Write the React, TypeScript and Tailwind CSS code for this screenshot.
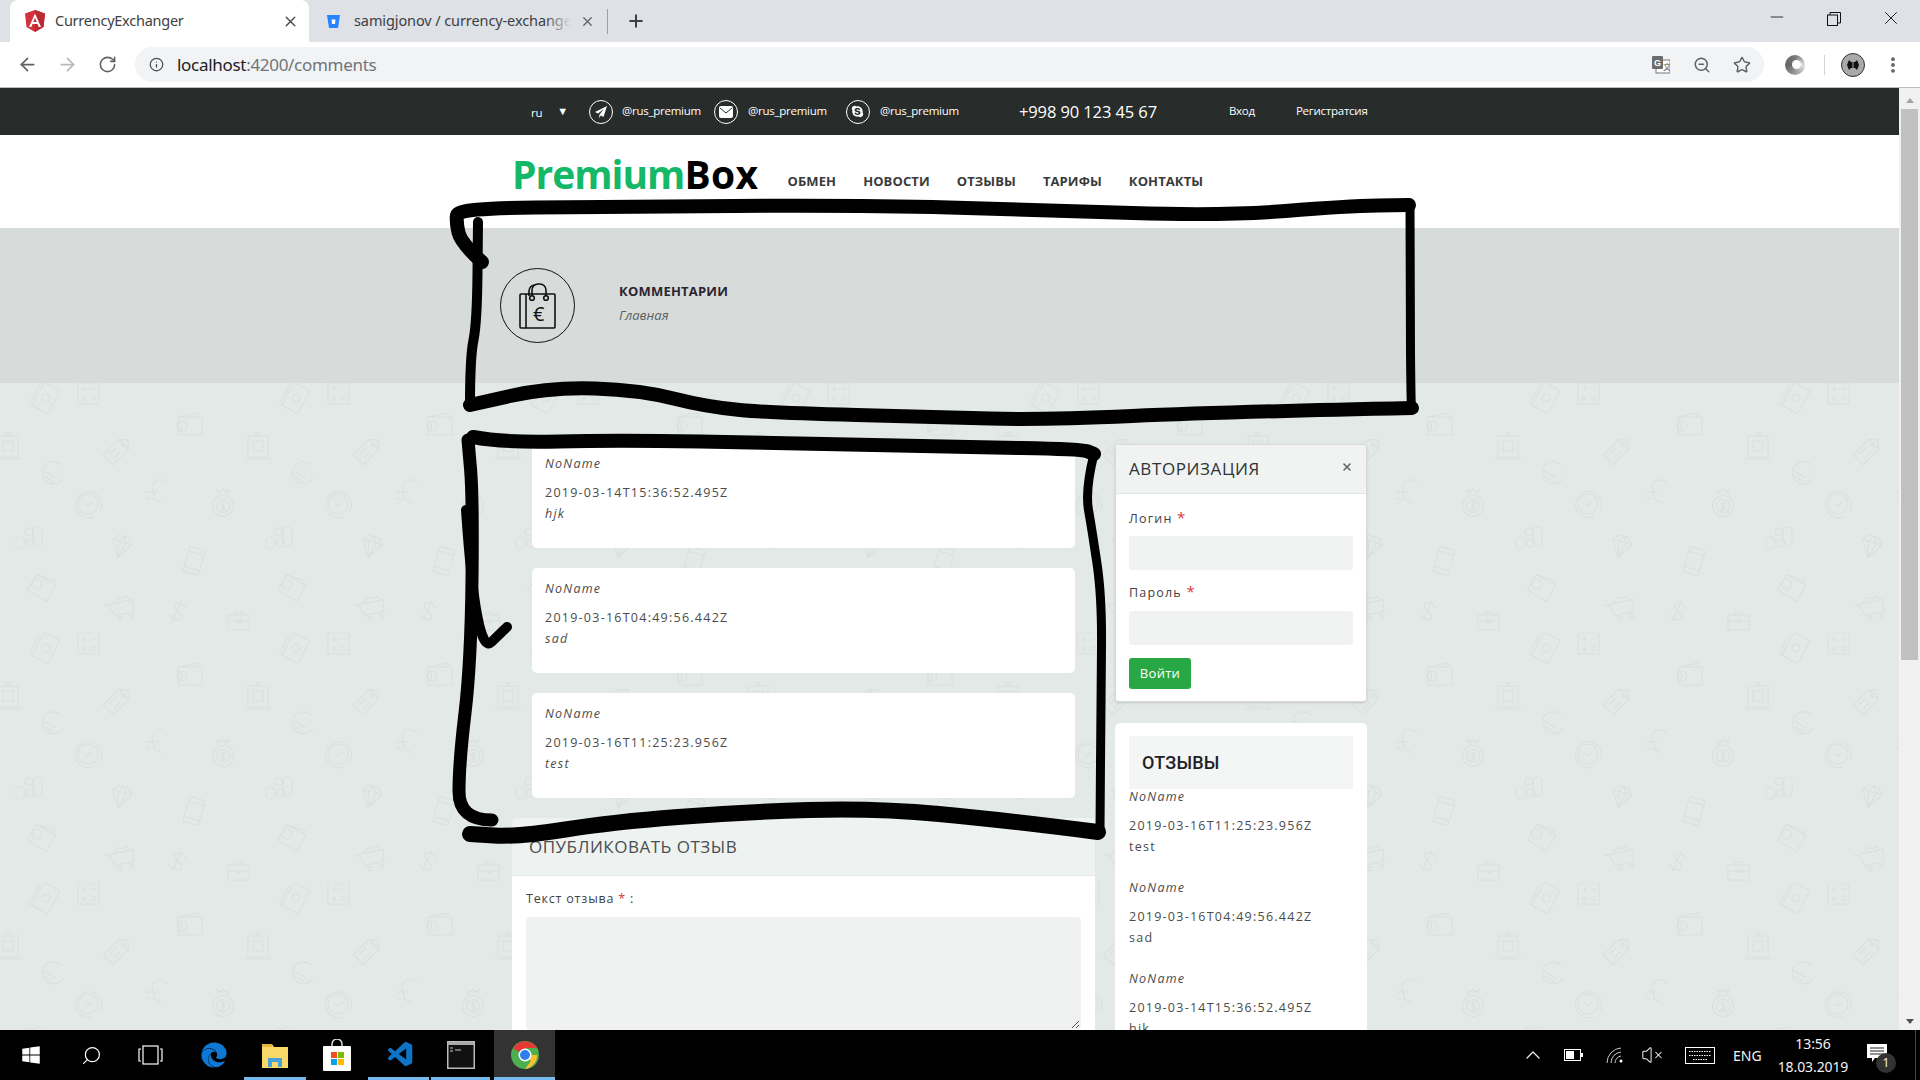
import * as React from "react";
import { ArrowLeft, ArrowRight, ChevronUp, Info, Minus, MoreVertical, Plus, RotateCw, Search, Star, VolumeX, X, ZoomOut } from "lucide-react";
import { FaEdge, FaSkype, FaWindows } from "react-icons/fa";
import { VscVscode } from "react-icons/vsc";

const openSans = "font-['Open_Sans',sans-serif]";

type Pt = [number, number];

function smooth(points: Pt[]) {
  let d = `M${points[0][0]} ${points[0][1]}`;
  for (let i = 1; i < points.length - 1; i++) {
    const mx = (points[i][0] + points[i + 1][0]) / 2;
    const my = (points[i][1] + points[i + 1][1]) / 2;
    d += ` Q${points[i][0]} ${points[i][1]} ${mx} ${my}`;
  }
  const last = points[points.length - 1];
  return d + ` L${last[0]} ${last[1]}`;
}

const strokes: { w: number; pts: Pt[] }[] = [
  { w: 14, pts: [[482, 262], [461, 243], [456, 222], [458, 208], [612, 207], [857, 205], [1041, 210], [1224, 216], [1347, 206], [1409, 205]] },
  { w: 9, pts: [[1410, 203], [1410, 300], [1411, 405], [1412, 410]] },
  { w: 14, pts: [[1412, 408], [1224, 412], [1040, 420], [940, 417], [773, 413], [707, 407], [640, 390], [550, 387], [470, 405]] },
  { w: 10, pts: [[470, 405], [470, 357], [477, 323], [478, 222]] },
  { w: 14, pts: [[473, 437], [505, 443], [613, 440], [787, 443], [960, 447], [1082, 449], [1094, 454]] },
  { w: 9, pts: [[1094, 454], [1085, 490], [1092, 530], [1102, 597], [1101, 697], [1100, 830]] },
  { w: 16, pts: [[1098, 832], [1004, 820], [874, 808], [743, 812], [613, 822], [518, 837], [470, 834]] },
  { w: 13, pts: [[492, 820], [459, 820], [459, 763], [471, 663], [473, 497], [468, 440]] },
  { w: 10, pts: [[466, 510], [476, 657], [507, 627]] },
];

function Scribbles() {
  return (
    <svg className="absolute left-0 top-0 pointer-events-none" width="1920" height="1080" fill="none" stroke="#000" strokeLinecap="round" strokeLinejoin="round">
      {strokes.map((s, i) => (
        <path key={i} d={smooth(s.pts)} strokeWidth={s.w} />
      ))}
    </svg>
  );
}

function PatternBg() {
  return (
    <svg className="absolute inset-0" width="100%" height="100%">
      <defs>
        <pattern id="tile" width="250" height="250" patternUnits="userSpaceOnUse">
          <g fill="none" stroke="#d9e0de" strokeWidth="1.1">
            {/* bills */}
            <g transform="translate(46 15) rotate(28)"><rect x="-9" y="-13" width="18" height="26" rx="2" /><circle r="4" /><path d="M-12 -9v22h14" /></g>
            {/* calculator */}
            <g transform="translate(89 11)"><rect x="-11" y="-11" width="21" height="21" /><path d="M-7 -5h5M-4.500 -7.500v5M2 -5h5M-7 3l4 4M-3 3l-4 4M2 3h5M2 6h5" /></g>
            {/* wallet */}
            <g transform="translate(190 42)"><path d="M-12 -8L8 -12v4M-12 -8h24v18h-24zM-12 -4a6 6 0 0 1 0 11" /><circle cx="-8" cy="1" r="5" /></g>
            {/* laptop */}
            <g transform="translate(8 64)"><rect x="-10" y="-11" width="20" height="21" /><rect x="-5" y="-6" width="10" height="10" /><path d="M-14 12h28M-3 -14h6M0 -14v3" /></g>
            <g transform="translate(258 64)"><rect x="-10" y="-11" width="20" height="21" /><rect x="-5" y="-6" width="10" height="10" /><path d="M-14 12h28" /></g>
            {/* tag */}
            <g transform="translate(118 67) rotate(45)"><path d="M-7 -8h14v22h-14zM-7 -8l7 -6 7 6M-3 0v9M3 0v9" /><circle cy="-7" r="1.500" /></g>
            {/* euro */}
            <g transform="translate(52 90)"><path d="M9 -8a11 11 0 1 0 2 13M-8 -2l12 7M-8 3l10 6" /></g>
            {/* clock */}
            <g transform="translate(88 121)"><path d="M5 13a13 13 0 1 1 7 -6" /><circle r="10" /><path d="M-3 0l3 2 4 -4" /></g>
            {/* pound */}
            <g transform="translate(156 108)"><path d="M11 -7a8 8 0 0 0 -15 3c0 6 4 9 2 12l8 4M-10 1h12M-5 8l-5 -1" /></g>
            {/* moneybag */}
            <g transform="translate(223 120)"><circle cy="3" r="10.500" /><path d="M-4 -8l-2 -5 4 2 2 -3 2 3 4 -2 -2 5" /><circle cy="3" r="6.500" /><path d="M2.500 0.500c-3 -2 -5 0 -3 2s4 2 2 4-4 0-4 0M0 -2v10" /></g>
            {/* coins */}
            <g transform="translate(29 156)"><rect x="-13" y="-2" width="9" height="12" rx="4" /><rect x="-4" y="-11" width="8" height="7" rx="3" /><rect x="4" y="-12" width="9" height="19" rx="4" /><circle cx="2" cy="4" r="4" /></g>
            {/* diamond */}
            <g transform="translate(121 164) rotate(15)"><path d="M-10 -5l5 -6h10l5 6 -10 16zM-10 -5h20M-4 -5l4 16 4 -16 -4 -6z" /></g>
            {/* phone */}
            <g transform="translate(194 178) rotate(16)"><rect x="-8" y="-13" width="16" height="26" rx="2" /><path d="M-8 -8h16M-8 8h16" /></g>
            {/* wallet tilted */}
            <g transform="translate(42 204) rotate(30)"><path d="M-11 -8L8 -12v4M-11 -8h22v18h-22z" /><circle cx="-6" cy="0" r="5" /></g>
            {/* cart */}
            <g transform="translate(122 226) rotate(-12)"><path d="M-17 -8l5 2 4 11h19l2 -12h-25" /><path d="M-7 -8l5 -4 5 2 4 -2 3 5" /><circle cx="-4" cy="9" r="2" /><circle cx="8" cy="9" r="2" /></g>
            {/* dollar */}
            <g transform="translate(177 228) rotate(25)"><path d="M7 -6c-4 -4 -13 -3 -12 2s12 3 12 8-9 6-13 2M0 -11v22" /></g>
            {/* briefcase */}
            <g transform="translate(239 238)"><rect x="-11" y="-6" width="21" height="15" /><path d="M-4 -6v-3h7v3M-11 0h21" /><circle cy="0" r="2" /></g>
          </g>
        </pattern>
      </defs>
      <rect width="100%" height="100%" fill="url(#tile)" />
    </svg>
  );
}

function Tabs() {
  return (
    <div className="h-[42px] bg-[#dee1e6] flex items-end font-['Noto_Sans',sans-serif] text-[14.500px] text-[#3c4043]">
      <div className="ml-[10px] w-[299px] h-[42px] bg-white rounded-t-[8px] flex items-center pl-[15px] pr-[10px]">
        <svg width="20" height="22" viewBox="0 0 20 22">
          <path d="M10 0L0 3.500l1.500 13.500L10 22l8.500-5L20 3.500z" fill="#d4303a" />
          <path d="M10 0v22l8.500-5L20 3.500z" fill="#b92a33" />
          <path d="M10 3.500L4 17h2.300l1.200-3h5l1.200 3H16zM8.300 12L10 7.800l1.700 4.200z" fill="#fff" />
        </svg>
        <span className="ml-[10px] flex-1 tracking-[-0.25px]">CurrencyExchanger</span>
        <X size={17} strokeWidth={2} className="text-[#4a4d50]" />
      </div>
      <div className="w-[299px] h-[42px] flex items-center pl-[17px] pr-[11px] relative">
        <svg width="15" height="15" viewBox="0 0 15 15">
          <path d="M1 1h13l-2 13H3z" fill="#2684ff" />
          <path d="M5.500 5.500h4L9 10H6z" fill="#fff" />
        </svg>
        <div className="relative ml-[13px] w-[217px] overflow-hidden whitespace-nowrap tracking-[-0.1px]">
          samigjonov / currency-exchanger
          <div className="absolute right-0 inset-y-0 w-[26px] bg-gradient-to-r from-transparent to-[#dee1e6]" />
        </div>
        <X size={15} strokeWidth={2} className="ml-[9px] text-[#5f6368]" />
        <div className="absolute right-[0px] top-[9px] h-[25px] w-px bg-[#9aa0a6]" />
      </div>
      <Plus size={20} strokeWidth={2.4} className="ml-[18px] mb-[11px] text-[#3c4043]" />
      <div className="flex-1" />
      <div className="h-[42px] flex items-start pt-[7px] text-[#111]">
        <Minus size={20} strokeWidth={1} className="mr-[40px]" />
        <svg width="14" height="14" viewBox="0 0 14 14" fill="none" stroke="#111" className="mt-[5px] mr-[39px]">
          <rect x="0.500" y="3" width="10" height="10.500" />
          <path d="M3 3V0.500h10.500V11H10.500" />
        </svg>
        <X size={22} strokeWidth={1} className="mr-[18px]" />
      </div>
    </div>
  );
}

function Toolbar() {
  return (
    <div className="h-[46px] bg-white border-b border-[#b9bcbf] flex items-center text-[#5f6368]">
      <ArrowLeft size={21} strokeWidth={2} className="ml-[17px]" />
      <ArrowRight size={21} strokeWidth={2} className="ml-[19px] text-[#b7b9bc]" />
      <RotateCw size={19} strokeWidth={2} className="ml-[20px]" />
      <div className="ml-[18px] w-[1629px] h-[35px] rounded-full bg-[#f1f3f4] flex items-center pl-[14px] pr-[13px]">
        <Info size={15} strokeWidth={2} className="text-[#4a4d50]" />
        <span className="ml-[13px] text-[17px] tracking-[-0.3px] font-['Noto_Sans',sans-serif] text-[#70757a]">
          <span className="text-[#202124]">localhost</span>:4200/comments
        </span>
        <div className="flex-1" />
        <svg width="18" height="18" viewBox="0 0 18 18" className="mr-[23px]">
          <rect x="4" y="4" width="14" height="13" fill="#fff" stroke="#777" />
          <rect width="11" height="13" rx="1" fill="#6a6d70" />
          <text x="2" y="10" fontSize="9" fontWeight="700" fontFamily="Liberation Sans" fill="#fff">G</text>
          <text x="11" y="14" fontSize="8" fontFamily="Noto Sans CJK SC" fill="#555">文</text>
        </svg>
        <ZoomOut size={18} strokeWidth={2} className="mr-[22px]" />
        <Star size={18} strokeWidth={2} />
      </div>
      <div className="ml-[21px] w-[20px] h-[20px] rounded-full bg-[conic-gradient(#777,#ddd,#999,#666,#777)] flex items-center justify-center">
        <div className="w-[9px] h-[9px] rounded-full bg-white ml-[2px]" />
      </div>
      <div className="ml-[19px] w-px h-[20px] bg-[#d0d2d4]" />
      <div className="ml-[16px] w-[24px] h-[24px] rounded-full bg-[#a9a9a9] border border-[#333] flex items-center justify-center">
        <svg width="14" height="14" viewBox="0 0 14 14"><path d="M1 7l2-5 2 2h4l2-2 2 5-2 5-2-2H5l-2 2z" fill="#111" /><path d="M7 3v8" stroke="#aaa" /></svg>
      </div>
      <MoreVertical size={20} strokeWidth={2.6} className="ml-[18px] text-[#5f6368]" />
    </div>
  );
}

function RoundIcon({ children }: { children: React.ReactNode }) {
  return (
    <div className="w-[24px] h-[24px] rounded-full border border-white flex items-center justify-center text-white">
      {children}
    </div>
  );
}

function TopBar() {
  return (
    <div className={`h-[47px] bg-[#282c2b] flex items-center text-white pl-[531px] text-[11.500px] tracking-[-0.25px] ${openSans}`}>
      <span className="mt-[2px]">ru</span>
      <span className="ml-[15px] text-[11px]">▼</span>
      <div className="ml-[21px]">
        <RoundIcon>
          <svg width="14" height="14" viewBox="0 0 14 14" fill="#fff"><path d="M13 1L1 7l3 1.500L10 4 5.500 9.500 5 13l2-2.500 2.500 1.500z" /></svg>
        </RoundIcon>
      </div>
      <span className="ml-[9px] mb-[2px] w-[82px]">@rus_premium</span>
      <div className="ml-[10px]">
        <RoundIcon>
          <svg width="14" height="12" viewBox="0 0 14 12"><rect width="14" height="12" rx="2" fill="#fff" /><path d="M1 2l6 5 6-5" fill="none" stroke="#282c2b" /></svg>
        </RoundIcon>
      </div>
      <span className="ml-[10px] mb-[2px] w-[86px]">@rus_premium</span>
      <div className="ml-[12px]">
        <RoundIcon>
          <FaSkype size={13} />
        </RoundIcon>
      </div>
      <span className="ml-[10px] mb-[2px] w-[139px]">@rus_premium</span>
      <span className="text-[16.500px] font-medium tracking-[-0.1px] mt-[1px] w-[210px]">+998 90 123 45 67</span>
      <span className="mb-[2px] w-[67px]">Вход</span>
      <span className="mb-[2px]">Регистратсия</span>
    </div>
  );
}

function SiteHeader() {
  const nav = ["ОБМЕН", "НОВОСТИ", "ОТЗЫВЫ", "ТАРИФЫ", "КОНТАКТЫ"];
  return (
    <div className={`h-[93px] bg-white flex items-start pl-[512px] pt-[14px] ${openSans}`}>
      <div className="text-[39px] leading-[50px] font-bold flex">
        <span className="text-[#14b866] tracking-[-1px]">Premium</span>
        <span className="text-black tracking-[0.4px]">Box</span>
      </div>
      <div className="ml-[29px] mt-[23px] flex gap-[27px] text-[13px] font-bold text-[#3a3a3a] tracking-[0.1px]">
        {nav.map((n) => (
          <span key={n}>{n}</span>
        ))}
      </div>
    </div>
  );
}

function Breadcrumb() {
  return (
    <div className={`h-[155px] bg-[#d7dcda] flex items-center pl-[500px] ${openSans}`}>
      <div className="w-[75px] h-[75px] rounded-full border border-[#111] flex items-center justify-center">
        <svg width="38" height="46" viewBox="0 0 38 46" fill="none" stroke="#111" strokeWidth="1.6">
          <rect x="1" y="11" width="35" height="34" rx="1" />
          <path d="M7 11v34" />
          <path d="M13 13V7a6 6 0 0 1 6-6h2a6 6 0 0 1 6 6v6" />
          <path d="M10 13V8a6 6 0 0 1 6-6" />
          <circle cx="13" cy="15" r="2.300" fill="#d7dcda" />
          <circle cx="27" cy="15" r="2.300" fill="#d7dcda" />
          <text x="14" y="38" fontSize="20" fontFamily="Open Sans" fill="#111" stroke="none">€</text>
        </svg>
      </div>
      <div className="ml-[44px] mb-[5px]">
        <div className="text-[13px] font-bold text-[#2c2430] tracking-[0.2px] leading-[18px]">КОММЕНТАРИИ</div>
        <div className="mt-[6px] text-[13px] italic text-[#5c5f60] leading-[18px]">Главная</div>
      </div>
    </div>
  );
}

function CommentCard({ date, text }: { date: string; text: string }) {
  return (
    <div className="h-[105px] bg-white rounded-[5px] pl-[13px] pt-[12px] text-[#4b4b4b] text-[12.500px] tracking-[1.25px]">
      <div className="italic leading-[18px]">NoName</div>
      <div className="mt-[11px] leading-[18px]">{date}</div>
      <div className="mt-[3px] italic leading-[18px]">{text}</div>
    </div>
  );
}

function LoginPanel() {
  return (
    <div className="h-[258px] bg-white border border-[#d5d9d8] rounded-[3px] shadow-sm">
      <div className="h-[49px] bg-[#f0f3f2] border-b border-[#e1e5e4] flex items-center justify-between pl-[13px] pr-[13px]">
        <span className="text-[17px] text-[#2f3336] tracking-[0.6px]">АВТОРИЗАЦИЯ</span>
        <X size={12} strokeWidth={3.2} className="text-[#666] mb-[4px]" />
      </div>
      <div className="px-[13px] pt-[16px] text-[12.500px] text-[#3f4345] tracking-[1.2px]">
        <div className="h-[18px] leading-[18px]">Логин <span className="text-[#d9363e] text-[15px] leading-none">*</span></div>
        <div className="mt-[8px] h-[34px] rounded-[3px] bg-[#f0f3f2]" />
        <div className="mt-[14px] h-[18px] leading-[18px]">Пароль <span className="text-[#d9363e] text-[15px] leading-none">*</span></div>
        <div className="mt-[9px] h-[34px] rounded-[3px] bg-[#f0f3f2]" />
        <div className="mt-[13px] w-[62px] h-[31px] rounded-[3px] bg-[#28a745] text-white text-[13px] tracking-[0.3px] flex items-center justify-center">Войти</div>
      </div>
    </div>
  );
}

function ReviewsPanel() {
  const items = [
    ["2019-03-16T11:25:23.956Z", "test"],
    ["2019-03-16T04:49:56.442Z", "sad"],
    ["2019-03-14T15:36:52.495Z", "hjk"],
  ];
  return (
    <div className="mt-[21px] bg-white rounded-[5px] px-[14px] pt-[13px] h-[400px]">
      <div className="h-[53px] bg-[#f4f5f5] flex items-center pl-[13px] text-[18px] font-medium text-[#221f26] font-['Roboto',sans-serif] tracking-[0.2px]">ОТЗЫВЫ</div>
      <div className="-mt-[1px] text-[12.500px] tracking-[1.25px] text-[#4b4b4b]">
        {items.map(([date, text]) => (
          <div key={date} className="h-[91px] leading-[18px]">
            <div className="italic">NoName</div>
            <div className="mt-[11px]">{date}</div>
            <div className="mt-[3px]">{text}</div>
          </div>
        ))}
      </div>
    </div>
  );
}

function Content() {
  return (
    <div className={`relative bg-[#e3e9e7] h-[647px] overflow-hidden ${openSans}`}>
      <PatternBg />
      <div className="relative flex pl-[512px]">
        <div className="w-[583px] pt-[60px]">
          <div className="mx-[20px] flex flex-col gap-[20px] w-[543px]">
            <CommentCard date="2019-03-14T15:36:52.495Z" text="hjk" />
            <CommentCard date="2019-03-16T04:49:56.442Z" text="sad" />
            <CommentCard date="2019-03-16T11:25:23.956Z" text="test" />
          </div>
          <div className="mt-[20px] bg-white rounded-[5px] h-[300px]">
            <div className="h-[58px] bg-[#eef2f1] border-b border-[#e3e8e6] rounded-t-[5px] pl-[17px] pt-[18px] text-[17px] leading-[22px] text-[#4a4e50] tracking-[0.5px]">ОПУБЛИКОВАТЬ ОТЗЫВ</div>
            <div className="px-[14px] pt-[14px]">
              <div className="text-[12.500px] leading-[18px] tracking-[0.8px] text-[#3f4345]">Текст отзыва <span className="text-[#d9363e]">*</span> :</div>
              <div className="relative mt-[9px] h-[113px] rounded-[4px] bg-[#eff2f1]">
                <svg className="absolute right-[1px] bottom-[1px]" width="9" height="9" stroke="#555"><path d="M1 8L8 1M5 8L8 5" /></svg>
              </div>
            </div>
          </div>
        </div>
        <div className="ml-[20px] w-[252px] pt-[61px]">
          <LoginPanel />
          <ReviewsPanel />
        </div>
      </div>
    </div>
  );
}

function ScrollBar() {
  return (
    <div className="w-[21px] bg-[#f1f1f1] flex flex-col items-center pt-[10px] relative">
      <div className="w-0 h-0 border-x-[4px] border-x-transparent border-b-[5px] border-b-[#a3a3a3]" />
      <div className="mt-[6px] w-[17px] h-[551px] bg-[#c1c1c1]" />
      <div className="absolute bottom-[6px] w-0 h-0 border-x-[4px] border-x-transparent border-t-[5px] border-t-[#505050]" />
    </div>
  );
}

function Taskbar() {
  const slot = "w-[61px] flex items-center justify-center relative h-full";
  return (
    <div className="relative h-[50px] bg-black flex items-stretch text-white font-['Noto_Sans',sans-serif]">
      <div className={slot}><FaWindows size={20} /></div>
      <div className={slot}><Search size={21} strokeWidth={1.4} className="-scale-x-100" /></div>
      <div className={`${slot} pr-[4px]`}>
        <svg width="25" height="20" viewBox="0 0 25 20" fill="none" stroke="#fff" strokeWidth="1.2"><rect x="5" y="1" width="15" height="18" /><path d="M3 4H1v12h2M22 4h2v12h-2" /></svg>
      </div>
      <div className={slot}><FaEdge size={26} className="text-[#0f78d4]" /></div>
      <div className={`${slot} w-[62px]`}>
        <svg width="28" height="28" viewBox="0 0 28 28">
          <path d="M1 3h10l2 3h14v21H1z" fill="#fbd86a" />
          <rect x="1" y="3" width="10" height="3" fill="#e8b53e" />
          <path d="M7 26v-9h14v9h-4v-5h-6v5z" fill="#4aa3d8" />
        </svg>
        <div className="absolute bottom-0 inset-x-[0px] h-[3px] bg-[#76b9ed]" />
      </div>
      <div className={slot}>
        <svg width="28" height="32" viewBox="0 0 28 32">
          <path d="M9 8V5a5 5 0 0 1 10 0v3" fill="none" stroke="#ddd" strokeWidth="1.5" />
          <rect y="7" width="28" height="25" rx="1" fill="#fff" />
          <rect x="8" y="13" width="6" height="6" fill="#f25022" />
          <rect x="15" y="13" width="6" height="6" fill="#7fba00" />
          <rect x="8" y="20" width="6" height="6" fill="#00a4ef" />
          <rect x="15" y="20" width="6" height="6" fill="#ffb900" />
        </svg>
      </div>
      <div className={`${slot} w-[63px] pl-[4px]`}>
        <VscVscode size={30} className="text-[#0f74c5]" />
        <div className="absolute bottom-0 inset-x-[1px] h-[3px] bg-[#76b9ed]" />
      </div>
      <div className={slot}>
        <svg width="28" height="28" viewBox="0 0 28 28">
          <rect x="0.750" y="0.750" width="26.500" height="26.500" fill="#111" stroke="#bbb" strokeWidth="1.5" />
          <rect x="1" y="1" width="26" height="3" fill="#aaa" />
          <path d="M3 7h3M3 10h3M8 9h6" stroke="#ccc" />
        </svg>
        <div className="absolute bottom-0 inset-x-[1px] h-[3px] bg-[#76b9ed]" />
      </div>
      <div className={`${slot} bg-[#333333] ml-[3px]`}>
        <svg width="28" height="28" viewBox="0 0 28 28">
          <circle cx="14" cy="14" r="14" fill="#4caf50" />
          <path d="M14 14L2 7.500A14 14 0 0 1 26.100 7H14z" fill="#e53935" />
          <path d="M14 14h12.100A14 14 0 0 1 14 28l6-8z" fill="#fbc02d" />
          <circle cx="14" cy="14" r="6.500" fill="#fff" />
          <circle cx="14" cy="14" r="5" fill="#2f80ed" />
        </svg>
        <div className="absolute bottom-0 inset-x-0 h-[3px] bg-[#76b9ed]" />
      </div>
      <div className="flex-1" />
      <div className="flex items-center text-[#f2f2f2]">
        <ChevronUp size={24} strokeWidth={1.2} className="mr-[19px]" />
        <svg width="20" height="12" viewBox="0 0 20 12" fill="none" className="mr-[22px]">
          <rect x="0.500" y="0.500" width="16" height="11" stroke="#fff" />
          <rect x="2" y="2" width="8" height="8" fill="#fff" />
          <rect x="17" y="4" width="2" height="4" fill="#fff" />
        </svg>
        <svg width="18" height="18" viewBox="0 0 18 18" fill="none" stroke="#ccc" strokeWidth="1" className="mr-[17px]">
          <path d="M1 17A15 15 0 0 1 15 2M5 17A11 11 0 0 1 15 6M9 17a7 7 0 0 1 6-7" />
          <circle cx="15" cy="15" r="1.500" fill="#fff" stroke="none" />
        </svg>
        <VolumeX size={22} strokeWidth={1.1} className="mr-[22px]" />
        <svg width="30" height="17" viewBox="0 0 30 17" fill="none" stroke="#fff" className="mr-[18px]">
          <rect x="0.500" y="0.500" width="29" height="16" />
          <path d="M4 4.500h22M4 8.500h22M8 12.500h14" strokeDasharray="1.500 1" />
        </svg>
        <span className="text-[14px] w-[42px]">ENG</span>
        <div className="w-[76px] flex flex-col items-center text-[14px] leading-[23px] tracking-[-0.1px]">
          <span>13:56</span>
          <span>18.03.2019</span>
        </div>
        <div className="relative ml-[16px] mr-[33px] mb-[4px]">
          <svg width="20" height="18" viewBox="0 0 20 18" fill="#fff">
            <path d="M0 0h20v14H8l-3 4v-4H0z" />
            <path d="M3 4h14M3 7h14M3 10h14" stroke="#222" />
          </svg>
          <div className="absolute left-[9px] top-[9px] w-[20px] h-[20px] rounded-full bg-[#333] flex items-center justify-center text-[12px] leading-none">1</div>
        </div>
      </div>
      <div className="absolute right-[4px] inset-y-0 w-px bg-[#444]" />
    </div>
  );
}

export default function App() {
  return (
    <div className="relative w-[1920px] h-[1080px] overflow-hidden bg-white">
      <Tabs />
      <Toolbar />
      <div className="h-[942px] flex">
        <div className="flex-1 overflow-hidden">
          <TopBar />
          <SiteHeader />
          <Breadcrumb />
          <Content />
        </div>
        <ScrollBar />
      </div>
      <Taskbar />
      <Scribbles />
    </div>
  );
}
